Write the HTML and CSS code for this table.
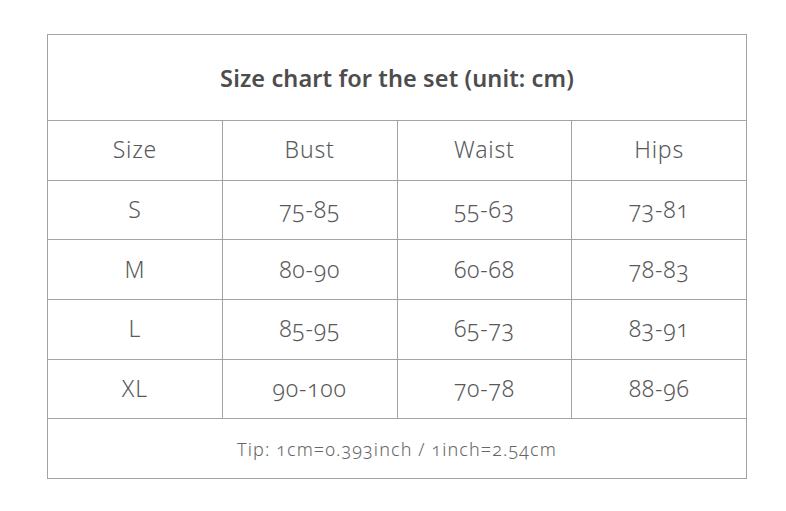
FILE: index.html
```html
<!DOCTYPE html>
<html lang="en">
<head>
<meta charset="utf-8">
<title>Size chart</title>
<link rel="stylesheet" href="styles.css">
</head>
<body>
<table class="chart">
  <thead>
    <tr class="title-row"><th colspan="4" class="title">Size chart for the set (unit: cm)</th></tr>
    <tr class="row head-row"><th>Size</th><th>Bust</th><th>Waist</th><th>Hips</th></tr>
  </thead>
  <tbody>
    <tr class="row"><td>S</td><td>75-85</td><td>55-63</td><td>73-81</td></tr>
    <tr class="row"><td>M</td><td>80-90</td><td>60-68</td><td>78-83</td></tr>
    <tr class="row"><td>L</td><td>85-95</td><td>65-73</td><td>83-91</td></tr>
    <tr class="row"><td>XL</td><td>90-100</td><td>70-78</td><td>88-96</td></tr>
  </tbody>
  <tfoot>
    <tr class="row tip-row"><td colspan="4" class="tip">Tip: 1cm=0.393inch / 1inch=2.54cm</td></tr>
  </tfoot>
</table>
</body>
</html>
```

FILE: styles.css
```css
html, body {
  margin: 0;
  background: #ffffff;
}
body {
  padding: 34px 0 0 47px;
  font-family: "Noto Sans", "Open Sans", sans-serif;
  color: #555555;
}
.chart {
  border-collapse: collapse;
  table-layout: fixed;
  width: 700px;
  font-feature-settings: "onum" 1;
}
.chart th,
.chart td {
  border: 1px solid #a3a3a3;
  text-align: center;
  vertical-align: middle;
  padding: 0 0 2px;
  font-weight: 300;
  font-size: 23px;
  letter-spacing: 0.8px;
  color: #595959;
}
.title-row {
  height: 86px;
}
.chart .title {
  font-weight: 600;
  font-size: 23.5px;
  letter-spacing: 0.1px;
  color: #4d4d4d;
  padding-bottom: 0;
}
.row {
  height: 59.7px;
}
.chart .tip {
  font-size: 18px;
  letter-spacing: 1.1px;
  color: #666666;
  padding-bottom: 0;
}
```
